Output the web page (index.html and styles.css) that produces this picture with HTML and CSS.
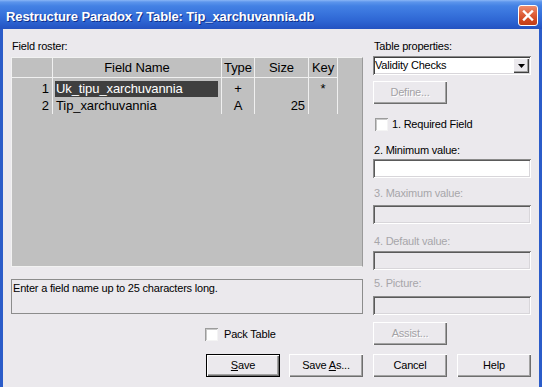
FILE: index.html
```html
<!DOCTYPE html>
<html>
<head>
<meta charset="utf-8">
<title>Restructure Paradox 7 Table</title>
<link rel="stylesheet" href="styles.css">
</head>
<body>
<div class="window">
  <div class="titlebar">
    <span class="title">Restructure Paradox 7 Table: Tip_xarchuvannia.db</span>
    <div class="close">
      <svg width="18" height="19" viewBox="0 0 18 19"><path d="M5 5.5 L13 13.5 M13 5.5 L5 13.5" stroke="#fff" stroke-width="2.4" stroke-linecap="square" fill="none"/></svg>
    </div>
  </div>
  <div class="client">
    <div class="pane-left">
      <div class="label">Field roster:</div>
      <div class="roster">
        <div class="cols">
          <div class="col c-num">
            <div class="hd"></div>
            <div class="cell first ar">1</div>
            <div class="cell ar">2</div>
          </div>
          <div class="col c-name">
            <div class="hd">Field Name</div>
            <div class="cell first"><span class="sel">Uk_tipu_xarchuvannia</span></div>
            <div class="cell">Tip_xarchuvannia</div>
          </div>
          <div class="col c-type">
            <div class="hd">Type</div>
            <div class="cell first ac">+</div>
            <div class="cell ac">A</div>
          </div>
          <div class="col c-size">
            <div class="hd">Size</div>
            <div class="cell first ar"></div>
            <div class="cell ar">25</div>
          </div>
          <div class="col c-key">
            <div class="hd">Key</div>
            <div class="cell first ac">*</div>
            <div class="cell ac"></div>
          </div>
        </div>
      </div>
      <div class="status">Enter a field name up to 25 characters long.</div>
      <div class="pack">
        <span class="check"></span>
        <span class="check-label">Pack Table</span>
      </div>
      <div class="btnrow left-btns">
        <div class="btn default"><span><u>S</u>ave</span></div>
        <div class="btn"><span>Save <u>A</u>s...</span></div>
      </div>
    </div>
    <div class="pane-right">
      <div class="label">Table properties:</div>
      <div class="combo">
        <span class="combo-text">Validity Checks</span>
        <span class="combo-arrow"><svg width="7" height="4" viewBox="0 0 7 4"><path d="M0 0 H7 L3.5 4 Z" fill="#000"/></svg></span>
      </div>
      <div class="btn disabled define"><span>Define...</span></div>
      <div class="reqrow">
        <span class="check"></span>
        <span class="check-label">1. Required Field</span>
      </div>
      <div class="label min-label">2. Minimum value:</div>
      <div class="field min-field"></div>
      <div class="label dim max-label">3. Maximum value:</div>
      <div class="field off max-field"></div>
      <div class="label dim def-label">4. Default value:</div>
      <div class="field off def-field"></div>
      <div class="label dim pic-label">5. Picture:</div>
      <div class="field off pic-field"></div>
      <div class="btn disabled assist"><span>Assist...</span></div>
      <div class="btnrow right-btns">
        <div class="btn"><span>Cancel</span></div>
        <div class="btn"><span>Help</span></div>
      </div>
    </div>
  </div>
</div>
</body>
</html>
```

FILE: styles.css
```css
* { box-sizing: border-box; }

html, body {
  margin: 0;
  padding: 0;
}

body {
  width: 542px;
  height: 387px;
  overflow: hidden;
  background: #EBE9ED;
  font-family: "Liberation Sans", Arial, sans-serif;
  font-size: 11px;
  letter-spacing: -0.2px;
  color: #000;
}

.window {
  width: 542px;
  height: 387px;
  display: flex;
  flex-direction: column;
  background: #EBE9ED;
}

/* ---------- title bar ---------- */
.titlebar {
  height: 29px;
  flex: none;
  display: flex;
  justify-content: space-between;
  align-items: center;
  padding: 3px 4px 0 6px;
  background: linear-gradient(to bottom,
    #8AB6F6 0px, #5C95EC 2px, #4381E4 6px, #3A76DE 12px,
    #2F67D4 20px, #2759C8 26px, #2452C0 29px);
}

.title {
  color: #fff;
  font-size: 13px;
  font-weight: bold;
  letter-spacing: -0.1px;
  line-height: 15px;
  text-shadow: 1px 1px 0 #0F2F8A;
  white-space: nowrap;
}

.close {
  align-self: flex-start;
  margin-top: 2px;
  width: 20px;
  height: 21px;
  border: 1px solid #fff;
  border-radius: 3px;
  background: linear-gradient(to bottom, #EE8C6E 0%, #DE5F39 45%, #CF4720 75%, #C13D17 100%);
  display: flex;
  align-items: center;
  justify-content: center;
}

/* ---------- client ---------- */
.client {
  flex: 1;
  display: flex;
  gap: 10px;
  padding-left: 8px;
  border-left: 3px solid #2B5CC9;
  border-right: 3px solid #2B5CC9;
}

.pane-left {
  width: 352px;
  display: flex;
  flex-direction: column;
}

.pane-right {
  width: 158px;
  display: flex;
  flex-direction: column;
}

.label {
  line-height: 13px;
  height: 13px;
  padding-left: 1px;
  white-space: nowrap;
}

.pane-left > .label,
.pane-right > .label:first-child {
  margin-top: 11px;
}

.dim { color: #A7A6AA; }

/* ---------- field roster grid ---------- */
.roster {
  margin-top: 4px;
  height: 210px;
  background: #C0C0C0;
  border: 1px solid #F2F2F2;
  border-right-color: #9A9A9A;
  font-size: 13px;
  letter-spacing: -0.1px;
}

.cols {
  display: flex;
  align-items: flex-start;
}

.col {
  display: flex;
  flex-direction: column;
  border-right: 1px solid #F0F0F0;
}

.c-num  { width: 41px; }
.c-name { width: 169px; }
.c-type { width: 33px; }
.c-size { width: 54px; }
.c-key  { width: 29px; }

.hd {
  height: 20px;
  line-height: 19px;
  border-bottom: 1px solid #F0F0F0;
  text-align: center;
  white-space: nowrap;
}

.cell {
  height: 17px;
  line-height: 17px;
  padding: 0 3px;
  white-space: nowrap;
}

.cell.first {
  height: 19px;
  padding-top: 2px;
}

.ar { text-align: right; }
.ac { text-align: center; }

.sel {
  display: block;
  margin-left: -1px;
  margin-top: 1px;
  width: 163px;
  height: 16px;
  line-height: 15px;
  padding-left: 1px;
  background: #3F3F3F;
  color: #fff;
}

/* ---------- status box ---------- */
.status {
  margin-top: 12px;
  height: 35px;
  border: 1px solid #8C8C8C;
  padding: 2px 0 0 1px;
  line-height: 13px;
}

/* ---------- checkboxes ---------- */
.check {
  width: 13px;
  height: 13px;
  flex: none;
  background: #fff;
  box-shadow: inset 1px 1px #9C9C9C, inset -1px -1px #F4F4F4, inset 2px 2px #C8C8C8;
}

.check-label {
  line-height: 13px;
  white-space: nowrap;
}

.pack {
  margin-top: 14px;
  height: 13px;
  display: flex;
  gap: 6px;
  padding-left: 194px;
}

.reqrow {
  margin-top: 14px;
  height: 13px;
  display: flex;
  gap: 4px;
  padding-left: 2px;
}

/* ---------- buttons ---------- */
.btn {
  width: 74px;
  height: 23px;
  display: flex;
  align-items: center;
  justify-content: center;
  background: #EBE9ED;
  box-shadow: inset 1px 1px #FFFFFF, inset -1px -1px #6E6E6E, inset -2px -2px #A3A3A3;
  line-height: 13px;
  white-space: nowrap;
}

.btn.default {
  border: 1px solid #000;
}

.btn.disabled {
  color: #A3A2A6;
  text-shadow: 1px 1px 0 #FFFFFF;
}

.btnrow {
  margin-top: 13px;
  display: flex;
}

.left-btns {
  justify-content: flex-end;
  gap: 9px;
}

.right-btns {
  margin-top: 9px;
  gap: 10px;
}

.define { margin-top: 6px; }
.assist { margin-top: 7px; }

/* ---------- combo + fields ---------- */
.combo {
  margin-top: 3px;
  height: 19px;
  display: flex;
  align-items: center;
  justify-content: space-between;
  padding: 2px;
  background: #fff;
  box-shadow: inset 1px 1px #8A8A8A, inset -1px -1px #FFFFFF, inset 2px 2px #404040, inset -2px -2px #D8D6DA;
}

.combo-text {
  line-height: 13px;
}

.combo-arrow {
  width: 16px;
  height: 15px;
  display: flex;
  align-items: center;
  justify-content: center;
  background: #EBE9ED;
  box-shadow: inset 1px 1px #FFFFFF, inset -1px -1px #404040, inset -2px -2px #A0A0A0;
}

.field {
  height: 19px;
  background: #fff;
  box-shadow: inset 1px 1px #8A8A8A, inset -1px -1px #FFFFFF, inset 2px 2px #5A5A5A, inset -2px -2px #D8D6DA;
}

.field.off { background: #EBE9ED; }

.min-label { margin-top: 13px; }
.min-field { margin-top: 2px; }
.max-label { margin-top: 9px; }
.max-field { margin-top: 5px; }
.def-label { margin-top: 11px; }
.def-field { margin-top: 3px; }
.pic-label { margin-top: 7px; }
.pic-field { margin-top: 6px; }
```
